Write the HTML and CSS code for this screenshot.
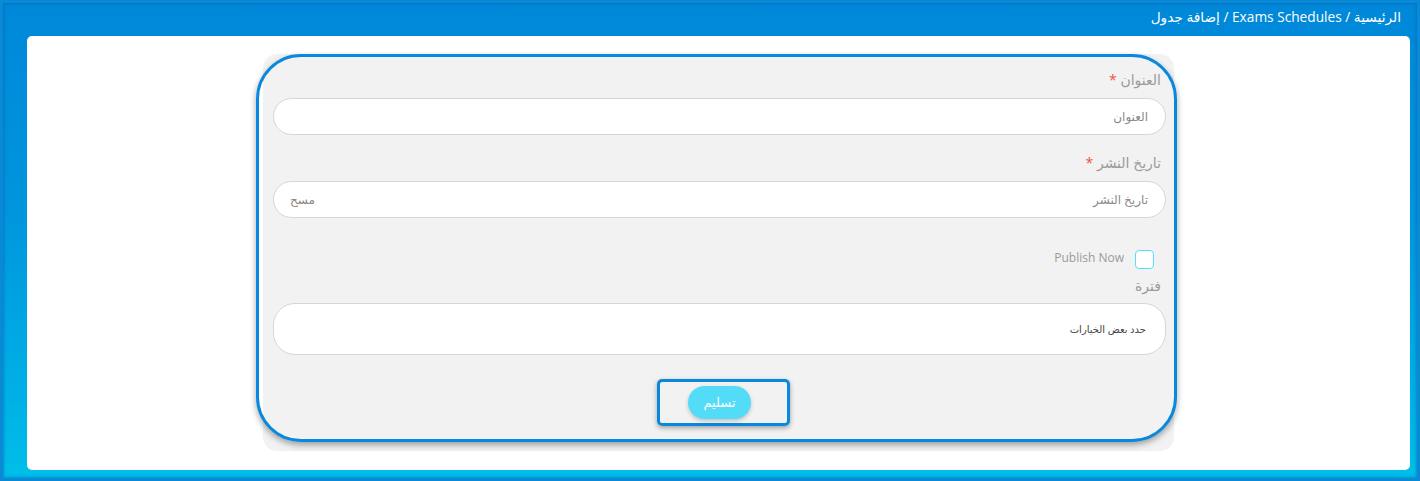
FILE: index.html
```html
<!DOCTYPE html>
<html lang="ar" dir="rtl">
<head>
<meta charset="utf-8">
<title>إضافة جدول</title>
<link rel="stylesheet" href="styles.css">
</head>
<body>
<div class="frame">
  <div class="crumbs">الرئيسية / Exams Schedules / إضافة جدول</div>
  <main class="card">
    <div class="panel">
      <form class="form">
        <label class="label">العنوان <span class="req">*</span></label>
        <div class="input"><span class="ph">العنوان</span></div>

        <label class="label label-2">تاريخ النشر <span class="req">*</span></label>
        <div class="input"><span class="ph">تاريخ النشر</span><span class="clear">مسح</span></div>

        <div class="check-row">
          <span class="checkbox"></span>
          <span class="check-text" dir="ltr">Publish Now</span>
        </div>

        <label class="label label-3">فترة</label>
        <div class="select"><span class="sel-text">حدد بعض الخيارات</span></div>

        <div class="submit-box">
          <button type="button" class="submit">تسليم</button>
        </div>
      </form>
    </div>
  </main>
</div>
</body>
</html>
```

FILE: styles.css
```css
* { box-sizing: border-box; }
html, body { margin: 0; padding: 0; }
body {
  font-family: "Open Sans", "DejaVu Sans", sans-serif;
  width: 1420px;
  height: 481px;
  overflow: hidden;
}
.frame {
  width: 1420px;
  height: 481px;
  display: flex;
  flex-direction: column;
  padding: 7px 10px 11px 27px;
  background: linear-gradient(180deg, #0087d9 0%, #0096dd 45%, #00b2e6 85%, #00bfea 100%);
  box-shadow: inset 0 0 0 3px #0a8ad6, inset 0 0 3px 4px rgba(0, 90, 160, 0.45);
}
.crumbs {
  height: 29px;
  line-height: 20px;
  padding-right: 9px;
  color: #ffffff;
  font-size: 13.7px;
  text-align: right;
}
.card {
  flex: 1;
  background: #ffffff;
  border-radius: 5px;
  padding-top: 18px;
}
.panel {
  width: 911px;
  margin: 0 auto;
  background: #f2f2f2;
  border-radius: 14px;
  padding-bottom: 9px;
}
.form {
  margin: 0 -3px 0 -7px;
  border: 3px solid #0a89dc;
  border-radius: 45px;
  box-shadow: 0 3px 6px rgba(0, 0, 0, 0.35);
  padding: 13px 8px 13px 14px;
  display: flex;
  flex-direction: column;
}
.label {
  display: block;
  height: 20px;
  line-height: 20px;
  padding-right: 5px;
  color: #9a9a9a;
  font-size: 14px;
  margin-bottom: 8px;
}
.req { color: #f0504a; }
.label-2 { margin-top: 18px; }
.label-3 { margin-top: 7px; margin-bottom: 7px; }
.input {
  height: 37px;
  background: #ffffff;
  border: 1px solid #d6d6d6;
  border-radius: 19px;
  padding: 0 17px 0 16px;
  display: flex;
  align-items: center;
  justify-content: space-between;
  font-size: 12px;
}
.ph { color: #8a8a8a; }
.clear { color: #8e8576; }
.check-row {
  margin-top: 32px;
  height: 19px;
  display: flex;
  align-items: center;
  gap: 11px;
  padding-right: 12px;
}
.checkbox {
  width: 19px;
  height: 19px;
  background: #ffffff;
  border: 1px solid #55def8;
  border-radius: 4px;
}
.check-text {
  color: #9a9a9a;
  font-size: 12px;
  margin-top: -4px;
}
.select {
  height: 52px;
  background: #ffffff;
  border: 1px solid #d6d6d6;
  border-radius: 22px;
  padding: 0 19px;
  display: flex;
  align-items: center;
}
.sel-text {
  color: #444444;
  font-size: 10px;
}
.submit-box {
  margin-top: 24px;
  margin-left: 384px;
  align-self: flex-end;
  width: 133px;
  height: 47px;
  border: 3px solid #0a89dc;
  border-radius: 5px;
  box-shadow: 0 2px 5px rgba(0, 0, 0, 0.35);
  display: flex;
  align-items: center;
  padding-right: 36px;
}
.submit {
  width: 63px;
  height: 33px;
  border: none;
  border-radius: 17px;
  background: #52dcf8;
  color: #ffffff;
  font-family: "DejaVu Sans", sans-serif;
  font-size: 13px;
  box-shadow: 0 2px 4px rgba(0, 0, 0, 0.2);
  padding: 0;
}
```
